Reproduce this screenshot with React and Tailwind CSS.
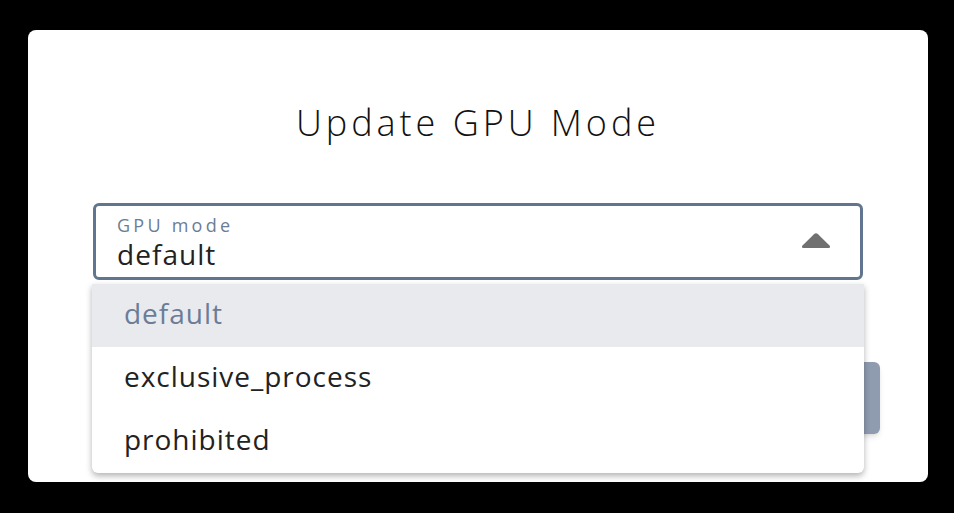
import { useState } from "react";

const options = ["default", "exclusive_process", "prohibited"];

export default function App() {
    const [value, setValue] = useState("default");

    return (
        <div className="w-[954px] h-[513px] bg-black pt-[30px] pl-[28px] overflow-hidden" style={{ fontFamily: '"Open Sans", "Noto Sans", sans-serif' }}>
            {/* Dialog card */}
            <div className="w-[900px] h-[452px] bg-white rounded-lg pt-[73px] px-[65px] flex flex-col">
                <h2 className="text-center text-[36px] leading-[40px] font-light text-[#111] tracking-[0.11em]">
                    Update GPU Mode
                </h2>

                {/* Select */}
                <div className="relative mt-[60px] z-10">
                    <div className="h-[77px] border-[3px] border-[#627590] rounded-md pl-[21px] pr-[28px] flex items-center justify-between">
                        <div className="flex flex-col self-start pt-[8px]">
                            <span className="text-[18px] leading-[22px] text-[#6b7d96] tracking-[0.18em]">GPU mode</span>
                            <span className="text-[28px] leading-[30px] text-[#222] tracking-[0.037em] mt-[3px]">{value}</span>
                        </div>
                        <svg width="32" height="20" viewBox="0 0 32 20" className="mb-[2px]">
                            <path d="M14 3.2 Q16 1.4 18 3.2 L29.5 14.5 Q31 17 28.5 17 L3.5 17 Q1 17 2.5 14.5 Z" fill="#707070" />
                        </svg>
                    </div>

                    {/* Dropdown menu */}
                    <div className="absolute left-[-1px] top-[81px] w-[772px] bg-white rounded-b-md shadow-[0_3px_6px_rgba(0,0,0,0.3)] overflow-hidden">
                        {options.map((opt) => (
                            <div
                                key={opt}
                                onClick={() => setValue(opt)}
                                className={`h-[63px] pl-[32px] pb-[6px] flex items-center text-[28px] tracking-[0.035em] ${opt === value ? "bg-[#e9eaee] text-[#6b7d96]" : "text-[#222]"}`}
                            >
                                {opt}
                            </div>
                        ))}
                    </div>
                </div>

                {/* Actions */}
                <div className="flex justify-end gap-4 mt-[82px] mr-[-17px]">
                    <button className="w-[160px] h-[72px] rounded-md bg-[#8f9cb0] text-white text-[20px] shadow-md">
                        Update
                    </button>
                </div>
            </div>
        </div>
    );
}
